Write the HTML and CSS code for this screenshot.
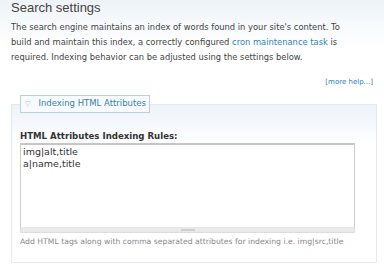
FILE: index.html
```html
<!DOCTYPE html>
<html lang="en">
<head>
  <meta charset="UTF-8" />
  <title>Search settings</title>
  <link rel="stylesheet" href="styles.css">
</head>
<body>
  <div class="page">
    <h1 class="title">Search settings</h1>
    <p class="intro">The search engine maintains an index of words found in your site's content. To build and maintain this index, a correctly configured <a href="#">cron maintenance task</a> is required. Indexing behavior can be adjusted using the settings below.</p>
    <div class="more"><a href="#">[more help...]</a></div>

    <fieldset class="box">
      <legend class="box-legend"><span class="toggle">&#9661;</span>Indexing HTML Attributes</legend>
      <label class="field-label" for="rules">HTML Attributes Indexing Rules:</label>
      <div class="textarea-wrap">
        <textarea id="rules" class="rules" spellcheck="false">img|alt,title
a|name,title</textarea>
        <div class="grippie"><span></span></div>
      </div>
      <div class="description">Add HTML tags along with comma separated attributes for indexing i.e. img|src,title</div>
    </fieldset>
  </div>
</body>
</html>
```

FILE: styles.css
```css
* {
  box-sizing: border-box;
  margin: 0;
  padding: 0;
}

body {
  background: linear-gradient(to bottom, #eef3f8 0, #ffffff 45px);
  font-family: "DejaVu Sans", Verdana, sans-serif;
  color: #444;
  width: 384px;
  height: 272px;
  overflow: hidden;
}

a {
  color: #2e82b8;
  text-decoration: none;
}

.page {
  padding: 0 7px 0 11px;
}

.title {
  font-family: "Liberation Sans", Arial, sans-serif;
  font-size: 13px;
  font-weight: normal;
  color: #444;
  line-height: 16px;
}

.intro {
  font-size: 8.35px;
  line-height: 15px;
  margin-top: 4px;
  padding-right: 20px;
}

.more {
  text-align: right;
  font-size: 7px;
  line-height: 12px;
  margin-top: 11px;
  padding-right: 4px;
}

.box {
  margin-top: 7px;
  width: 366px;
  border: 1px solid #e6eaee;
  background: linear-gradient(to bottom, #edf3fa 0, #ffffff 40px);
  padding: 17px 21px 14px 8px;
}

.box-legend {
  border: 1px solid #b7d2dc;
  background: #f7fbfd;
  color: #3b7fa6;
  font-size: 8.5px;
  line-height: 15px;
  padding: 0 3px 0 4px;
}

.toggle {
  color: #b8c4cc;
  font-size: 7px;
  margin-right: 8px;
}

.field-label {
  display: block;
  font-weight: bold;
  font-size: 8.6px;
  line-height: 12px;
  color: #333;
  margin-bottom: 1px;
}

.textarea-wrap {
  width: 335px;
}

.rules {
  display: block;
  width: 100%;
  height: 84px;
  border: 1px solid #ccc;
  border-top: 2px solid #c6c6c6;
  border-bottom: none;
  resize: none;
  font-family: "DejaVu Sans", Verdana, sans-serif;
  font-size: 9.5px;
  line-height: 12px;
  color: #333;
  padding: 1px 2px;
  background: #fff;
}

.grippie {
  height: 6px;
  background: #e9e9e9;
  border: 1px solid #ddd;
  border-top: none;
  display: flex;
  justify-content: center;
  align-items: center;
}

.grippie span {
  width: 14px;
  height: 2px;
  background: #d0d0d0;
}

.description {
  font-size: 7.7px;
  line-height: 12px;
  color: #888;
  margin-top: 3px;
}
```
